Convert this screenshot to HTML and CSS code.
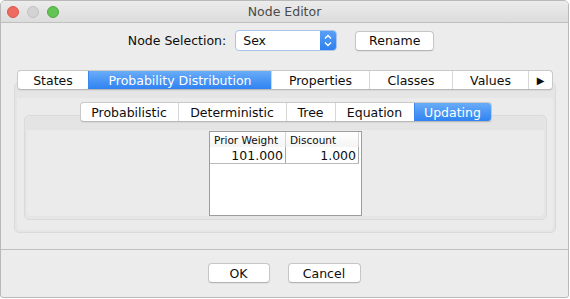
FILE: index.html
```html
<!DOCTYPE html>
<html lang="en">
<head>
    <meta charset="UTF-8">
    <title>Node Editor</title>
    <link rel="stylesheet" href="styles.css">
</head>
<body>
    <div class="window">
        <div class="titlebar">
            <div class="lights">
                <span class="light red"></span>
                <span class="light idle"></span>
                <span class="light green"></span>
            </div>
            <div class="title">Node Editor</div>
        </div>

        <div class="content">
            <div class="selection-row">
                <span class="label">Node Selection:</span>
                <div class="select">
                    <span class="select-value">Sex</span>
                    <span class="stepper">
                        <svg width="16" height="21" viewBox="0 0 16 21">
                            <path d="M5 8.5 L8 5.5 L11 8.5" fill="none" stroke="#fff" stroke-width="1.4"/>
                            <path d="M5 12.5 L8 15.5 L11 12.5" fill="none" stroke="#fff" stroke-width="1.4"/>
                        </svg>
                    </span>
                </div>
                <button class="btn rename">Rename</button>
            </div>

            <!-- main tab pane -->
            <div class="tabs main-tabs">
                <div class="tab states">States</div>
                <div class="tab dist active">Probability Distribution</div>
                <div class="tab props">Properties</div>
                <div class="tab classes">Classes</div>
                <div class="tab values">Values</div>
                <div class="tab arrow">&#9654;</div>
            </div>
            <div class="panel outer-panel">
                <div class="panel-body outer-body">
                    <div class="tabs sub-tabs">
                        <div class="tab prob">Probabilistic</div>
                        <div class="tab det">Deterministic</div>
                        <div class="tab tree">Tree</div>
                        <div class="tab eq">Equation</div>
                        <div class="tab upd active">Updating</div>
                    </div>
                    <div class="panel inner-panel">
                        <div class="panel-body inner-body">
                            <div class="table-box">
                                <table class="grid">
                                    <thead>
                                        <tr>
                                            <th>Prior Weight</th>
                                            <th>Discount</th>
                                        </tr>
                                    </thead>
                                    <tbody>
                                        <tr>
                                            <td>101.000</td>
                                            <td>1.000</td>
                                        </tr>
                                    </tbody>
                                </table>
                            </div>
                        </div>
                    </div>
                </div>
            </div>
        </div>

        <div class="footer">
            <button class="btn ok">OK</button>
            <button class="btn cancel">Cancel</button>
        </div>
    </div>
</body>
</html>
```

FILE: styles.css
```css
html, body {
    margin: 0;
    padding: 0;
    background: #ffffff;
}

body {
    font-family: 'DejaVu Sans', 'Liberation Sans', sans-serif;
    font-size: 12.5px;
    color: #0d0d0d;
}

.window {
    width: 569px;
    height: 298px;
    box-sizing: border-box;
    border: 1px solid #b9b9b9;
    border-radius: 5px 5px 3px 3px;
    background: #ececec;
    display: flex;
    flex-direction: column;
    overflow: hidden;
}

/* title bar */
.titlebar {
    height: 21px;
    display: flex;
    align-items: center;
    position: relative;
    background: linear-gradient(#ececec, #dcdcdc);
    border-bottom: 1px solid #c0c0c0;
}

.lights {
    display: flex;
    gap: 8px;
    padding-left: 6px;
}

.light {
    width: 12px;
    height: 12px;
    border-radius: 50%;
    box-sizing: border-box;
}

.light.red {
    background: #ee6a5f;
    border: 1px solid #d9574c;
}

.light.idle {
    background: #d3d3d3;
    border: 1px solid #c2c2c2;
}

.light.green {
    background: #61c454;
    border: 1px solid #51a93f;
}

.title {
    position: absolute;
    left: 0;
    right: 0;
    text-align: center;
    color: #4a4a4a;
    pointer-events: none;
}

/* content */
.content {
    display: flex;
    flex-direction: column;
    padding: 7px 12px 0 13px;
}

.selection-row {
    display: flex;
    align-items: center;
    justify-content: center;
    height: 21px;
    padding-right: 8px;
}

.label {
    margin-right: 9px;
}

.select {
    display: flex;
    align-items: center;
    width: 102px;
    height: 21px;
    box-sizing: border-box;
    background: #fff;
    border: 1px solid #a9c4e8;
    border-radius: 4px;
    overflow: hidden;
    margin-right: 18px;
}

.select-value {
    flex: 1;
    padding-left: 7px;
}

.stepper {
    display: flex;
    width: 16px;
    height: 21px;
    background: linear-gradient(#5aa2f7, #2d7ff0);
}

.btn {
    font-family: inherit;
    font-size: 12.5px;
    color: #0d0d0d;
    background: #fff;
    border: 1px solid #c6c6c6;
    border-bottom-color: #b3b3b3;
    border-radius: 4px;
    height: 20px;
    padding: 0;
    box-shadow: 0 1px 1px rgba(0, 0, 0, 0.05);
}

.rename {
    width: 79px;
}

/* tabs */
.tabs {
    display: flex;
    align-self: center;
    height: 20px;
    box-sizing: border-box;
    background: #fff;
    border: 1px solid #c9c9c9;
    border-bottom-color: #b9b9b9;
    border-radius: 4px;
    position: relative;
    z-index: 1;
    box-shadow: 0 1px 1px rgba(0, 0, 0, 0.06);
}

.tab {
    display: flex;
    align-items: center;
    justify-content: center;
    border-left: 1px solid #d6d6d6;
    white-space: nowrap;
    box-sizing: border-box;
}

.tab:first-child {
    border-left: none;
    border-radius: 3px 0 0 3px;
}

.tab:last-child {
    border-radius: 0 3px 3px 0;
}

.tab.active {
    color: #fff;
    background: linear-gradient(#69acf9, #2f83f1);
    border-left-color: #3a87ef;
}

.main-tabs {
    margin-top: 19px;
    margin-bottom: -8px;
}

.main-tabs .states { width: 70px; }
.main-tabs .dist { width: 183px; }
.main-tabs .props { width: 98px; }
.main-tabs .classes { width: 83px; }
.main-tabs .values { width: 76px; }

.main-tabs .arrow {
    width: 24px;
    font-size: 10px;
}

.sub-tabs {
    margin-bottom: -7px;
}

.sub-tabs .prob { width: 97px; }
.sub-tabs .det { width: 108px; }
.sub-tabs .tree { width: 49px; }
.sub-tabs .eq { width: 79px; }
.sub-tabs .upd { width: 77px; }

/* panels */
.panel {
    border: 1px solid #dadada;
    border-radius: 5px;
    background: #e5e5e5;
}

.panel-body {
    display: flex;
    flex-direction: column;
    background: #ebebeb;
    border-radius: 0 0 4px 4px;
}

.outer-panel {
    height: 151px;
    box-sizing: border-box;
}

.outer-body {
    margin: 0 2px 2px;
    padding: 19px 6px 10px 7px;
    height: 118px;
    box-sizing: content-box;
    background: linear-gradient(#e5e5e5 0, #e5e5e5 15px, #ebebeb 15px);
}

.inner-panel {
    height: 105px;
    box-sizing: border-box;
}

.inner-body {
    margin: 0 2px 2px;
    height: 100px;
    box-sizing: border-box;
    align-items: center;
    padding-top: 15px;
    background: linear-gradient(#e4e4e4 0, #e4e4e4 14px, #ebebeb 14px);
}

/* table */
.table-box {
    width: 153px;
    height: 85px;
    box-sizing: border-box;
    background: #fff;
    border: 1px solid #9d9d9d;
}

.grid {
    border-collapse: collapse;
    width: 149px;
}

.grid th {
    font-weight: normal;
    font-size: 10.5px;
    text-align: left;
    height: 15px;
    padding: 0 0 0 4px;
    border-right: 1px solid #d3d3d3;
    background: linear-gradient(#ffffff, #f4f4f4);
}

.grid th:first-child {
    width: 71px;
}

.grid td {
    height: 16px;
    text-align: right;
    padding: 0 2px 0 0;
    border-right: 1px solid #a8a8a8;
    border-bottom: 1px solid #bcbcbc;
}

/* footer */
.footer {
    margin-top: 16px;
    border-top: 1px solid #bfbfbf;
    display: flex;
    justify-content: center;
    gap: 18px;
    padding-top: 13px;
    padding-right: 1px;
}

.ok {
    width: 62px;
}

.cancel {
    width: 73px;
}
```
